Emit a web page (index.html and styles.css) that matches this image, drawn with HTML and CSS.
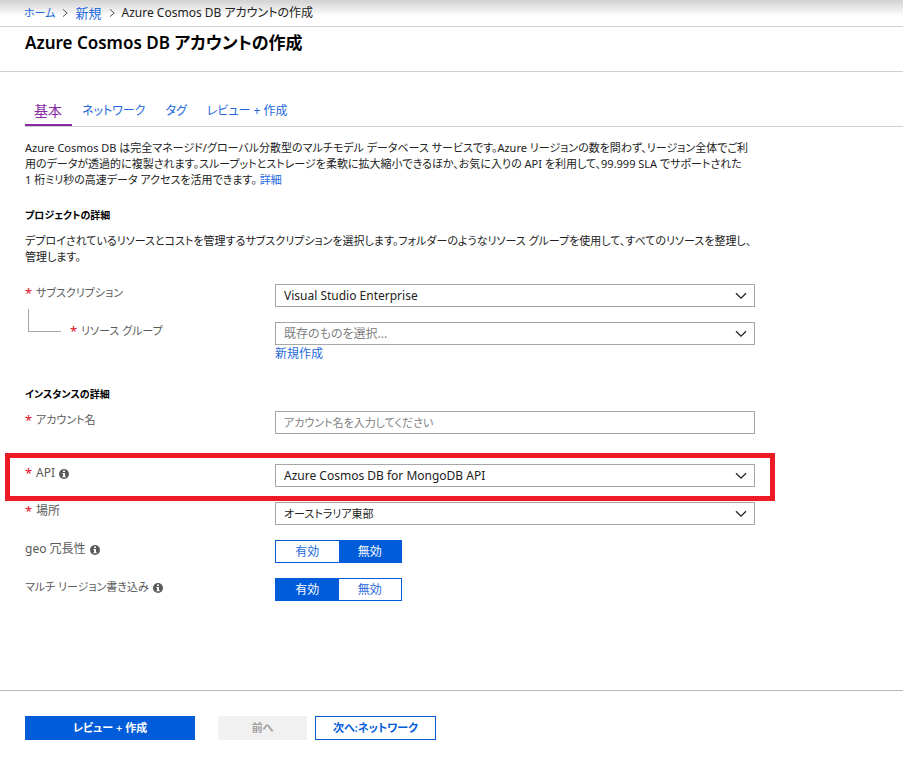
FILE: index.html
```html
<!DOCTYPE html>
<html lang="ja">
<head>
<meta charset="utf-8">
<meta name="viewport" content="width=device-width, initial-scale=1">
<title>Azure Cosmos DB アカウントの作成</title>
<link rel="stylesheet" href="styles.css">
</head>
<body>
<svg class="symbols" aria-hidden="true">
  <symbol id="chevron" viewBox="0 0 12 8"><path d="M1 1.2 6 6.2 11 1.2" fill="none" stroke="#222" stroke-width="1.3"/></symbol>
  <symbol id="crumb" viewBox="0 0 6 8"><path d="M1 .4 5.2 4 1 7.6" fill="none" stroke="#555" stroke-width="1"/></symbol>
  <symbol id="info" viewBox="0 0 10 10"><circle cx="5" cy="5" r="5" fill="#5a5a5a"/><path d="M4 1.6h2v1.3H4zM3.4 3.9H6v3.3h.7v1H3.4v-1h.7V4.9h-.7z" fill="#fff"/></symbol>
</svg>

<nav class="breadcrumb" aria-label="階層">
  <a class="compact" href="#">ホーム</a>
  <svg class="crumb-icon"><use href="#crumb"/></svg>
  <a class="crumb-link" href="#">新規</a>
  <svg class="crumb-icon"><use href="#crumb"/></svg>
  <span>Azure Cosmos DB アカウントの作成</span>
</nav>

<header class="title-bar">
  <h1>Azure Cosmos DB アカウントの作成</h1>
</header>

<main class="content">
  <nav class="tabs">
    <a class="tab tab-active" href="#" aria-current="page">基本</a>
    <a class="tab" href="#">ネットワーク</a>
    <a class="tab" href="#">タグ</a>
    <a class="tab" href="#">レビュー + 作成</a>
  </nav>

  <form class="form" id="create">
    <p class="text compact">Azure Cosmos DB は完全マネージド/グローバル分散型のマルチモデル データベース サービスです。Azure リージョンの数を問わず、リージョン全体でご利<br>用のデータが透過的に複製されます。スループットとストレージを柔軟に拡大縮小できるほか、お気に入りの API を利用して、99.999 SLA でサポートされた<br>1 桁ミリ秒の高速データ アクセスを活用できます。 <a href="#">詳細</a></p>

    <h2 class="intro-gap">プロジェクトの詳細</h2>
    <p class="text compact desc">デプロイされているリソースとコストを管理するサブスクリプションを選択します。フォルダーのようなリソース グループを使用して、すべてのリソースを整理し、<br>管理します。</p>

    <div class="rows">
      <div class="row">
        <label class="label compact" for="subscription"><span class="req">*</span>サブスクリプション</label>
        <div class="select">
          <select id="subscription"><option>Visual Studio Enterprise</option></select>
          <svg class="chevron"><use href="#chevron"/></svg>
        </div>
      </div>
      <div class="row">
        <label class="label label-nested compact" for="group"><span class="branch"></span><span class="req">*</span>リソース グループ</label>
        <div class="field">
          <div class="select">
            <select id="group" class="empty"><option>既存のものを選択...</option></select>
            <svg class="chevron"><use href="#chevron"/></svg>
          </div>
          <a class="create-link" href="#">新規作成</a>
        </div>
      </div>
    </div>

    <h2 class="section-gap">インスタンスの詳細</h2>
    <div class="row account">
      <label class="label compact" for="account"><span class="req">*</span>アカウント名</label>
      <input class="input compact" id="account" type="text" placeholder="アカウント名を入力してください">
    </div>
    <div class="rows rows-instance">
      <div class="row highlight">
        <label class="label" for="api"><span class="req">*</span>API<svg class="info"><use href="#info"/></svg></label>
        <div class="select">
          <select id="api"><option>Azure Cosmos DB for MongoDB API</option></select>
          <svg class="chevron"><use href="#chevron"/></svg>
        </div>
      </div>
      <div class="row">
        <label class="label" for="location"><span class="req">*</span>場所</label>
        <div class="select">
          <select class="compact" id="location"><option>オーストラリア東部</option></select>
          <svg class="chevron"><use href="#chevron"/></svg>
        </div>
      </div>
      <div class="row">
        <span class="label" id="geo-label">geo 冗長性<svg class="info"><use href="#info"/></svg></span>
        <div class="toggle" role="radiogroup" aria-labelledby="geo-label">
          <label class="option"><input type="radio" name="geo"><span>有効</span></label>
          <label class="option"><input type="radio" name="geo" checked><span>無効</span></label>
        </div>
      </div>
      <div class="row">
        <span class="label compact" id="multi-label">マルチ リージョン書き込み<svg class="info"><use href="#info"/></svg></span>
        <div class="toggle" role="radiogroup" aria-labelledby="multi-label">
          <label class="option"><input type="radio" name="multi" checked><span>有効</span></label>
          <label class="option"><input type="radio" name="multi"><span>無効</span></label>
        </div>
      </div>
    </div>
  </form>
</main>

<footer class="footer">
  <button class="button primary" type="submit" form="create">レビュー + 作成</button>
  <button class="button previous" type="button" disabled>前へ</button>
  <button class="button next" type="button">次へ:ネットワーク</button>
</footer>
</body>
</html>
```
FILE: styles.css
```css
* { box-sizing: border-box; }

body {
  margin: 0;
  background: #fff;
  color: #222;
  font: 12px/16px "Noto Sans", "Noto Sans CJK JP", sans-serif;
  font-feature-settings: "palt";
}

a { color: #2469dc; text-decoration: none; }
h1, h2, p { margin: 0; }
button, input, select { font: inherit; font-feature-settings: inherit; }
.compact { font-size: 11px; }
.symbols { position: absolute; width: 0; height: 0; }

.breadcrumb {
  display: flex;
  align-items: center;
  gap: 7px;
  height: 27px;
  padding: 0 24px;
  border-bottom: 1px solid #d0d0d0;
  background: linear-gradient(#d2d2d2, #fff 16px);
}
.crumb-link { font-size: 13px; }
.crumb-icon { width: 6px; height: 8px; }

.title-bar {
  height: 45px;
  padding: 4px 25px;
  border-bottom: 1px solid #d0d0d0;
}
h1 { color: #000; font-size: 17px; line-height: 24px; font-weight: 600; }

.content { padding: 24px 0 89px 25px; }
.tabs { display: flex; border-bottom: 1px solid #d0d0d0; }
.tab {
  height: 30px;
  padding: 5px 10px 0;
  line-height: 20px;
}
.tab-active {
  padding: 5px 10px 0 9px;
  border-bottom: 2px solid #882aa3;
  color: #882aa3;
  font-size: 14px;
}

.form { max-width: 730px; padding-top: 13px; }
.text { white-space: nowrap; }
h2 { color: #000; font-size: 10px; line-height: 16px; font-weight: 700; }
.intro-gap { margin-top: 19px; }
.section-gap { margin-top: 24px; }
.desc { margin-top: 10px; }

.rows { display: flex; flex-direction: column; gap: 15px; margin-top: 19px; }
.rows-instance { margin-top: 30px; }
.account { margin-top: 9px; }
.row {
  position: relative;
  display: grid;
  grid-template-columns: 250px 1fr;
  align-items: start;
}
.label { display: flex; align-items: center; color: #5a5a5a; line-height: 18px; }
.req { width: 11px; color: #e00b1c; font-size: 13px; }
.info { width: 10px; height: 10px; margin: 2px 0 0 4px; }
.branch {
  width: 33px;
  height: 23px;
  margin: -21px 9px 0 3px;
  border: solid #a6a6a6;
  border-width: 0 0 1px 1px;
}
.label-nested { height: 18px; }

.select { position: relative; }
.select select, .input {
  display: block;
  width: 100%;
  height: 23px;
  padding: 0 8px;
  border: 1px solid #a6a6a6;
  border-radius: 0;
  background: #fff;
  color: #222;
  appearance: none;
}
.select .empty, .input::placeholder { color: #808080; opacity: 1; }
.chevron {
  position: absolute;
  top: 8px;
  right: 8px;
  width: 12px;
  height: 8px;
  pointer-events: none;
}
.create-link { display: block; padding-top: 1px; }

.highlight::after {
  content: "";
  position: absolute;
  inset: -11px -20px -14px;
  border: 5px solid #ed1c24;
  pointer-events: none;
}

.toggle { display: flex; width: 127px; height: 23px; border: 1px solid #015cda; }
.option { position: relative; flex: 1; }
.option input { position: absolute; inset: 0; margin: 0; opacity: 0; }
.option span { display: block; color: #2469dc; line-height: 21px; text-align: center; }
.option input:checked + span { background: #015cda; color: #fff; }

.footer {
  display: flex;
  padding: 25px 25px 19px;
  border-top: 1px solid #b8b8b8;
}
.button {
  height: 24px;
  padding: 0;
  border: 1px solid #015cda;
  background: #fff;
  color: #015cda;
  font-size: 11px;
  font-weight: 600;
}
.primary { width: 170px; background: #015cda; color: #fff; }
.previous { width: 89px; margin: 0 8px 0 23px; border-color: #f1f1f1; background: #f1f1f1; color: #a0a0a0; }
.next { width: 121px; }
```
